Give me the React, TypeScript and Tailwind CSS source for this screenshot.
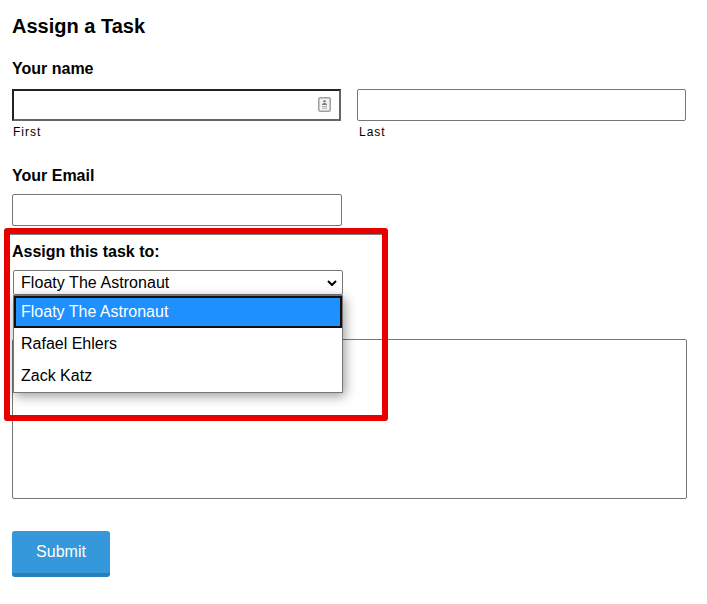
export default function App() {
  const font = { fontFamily: '"Liberation Sans", Arial, sans-serif' };
  return (
    <div className="relative w-[707px] h-[604px] bg-white text-black overflow-hidden" style={font}>
      <div className="flex flex-col pl-[12px] pt-[14px]">
        <h2 className="text-[20px] leading-[24px] font-bold">Assign a Task</h2>
        <label className="mt-[22px] h-[18px] text-[16px] leading-[18px] font-bold">Your name</label>
        <div className="mt-[11px] flex gap-[16px]">
          <div className="flex flex-col w-[329px]">
            <div className="relative h-[32px] border-2 border-t-[#222222] border-l-[#222222] border-r-[#666666] border-b-[#666666] bg-white">
              <svg className="absolute right-[8px] top-[6px]" width="13" height="15" viewBox="0 0 13 15">
                <rect x="0.75" y="0.75" width="11.5" height="13.5" rx="1.5" fill="#f2f2f2" stroke="#a0a0a0" strokeWidth="1.5" />
                <circle cx="6.5" cy="4.3" r="1.2" fill="#808080" />
                <path d="M4 8 L9 8 L9 7 L7.3 6 L5.7 6 L4 7 Z" fill="#808080" />
                <path d="M4 9.5 H9 M4 11.2 H9" stroke="#b0b0b0" strokeWidth="1" />
              </svg>
            </div>
            <span className="mt-[4px] ml-[1px] text-[12px] leading-[14px] tracking-[1px]">First</span>
          </div>
          <div className="flex flex-col w-[329px]">
            <div className="h-[32px] border border-[#767676] rounded-[2px] bg-white" />
            <span className="mt-[4px] ml-[2px] text-[12px] leading-[14px] tracking-[1px]">Last</span>
          </div>
        </div>
        <label className="mt-[28px] h-[18px] text-[16px] leading-[18px] font-bold">Your Email</label>
        <div className="mt-[9px] w-[330px] h-[32px] border border-[#767676] rounded-[2px] bg-white" />
        <label className="mt-[17px] h-[18px] text-[16px] leading-[18px] font-bold">Assign this task to:</label>
        <div className="mt-[9px] ml-[1px] w-[330px] h-[25px] border border-[#767676] rounded-[2px] bg-white flex items-center justify-between pl-[7px] pr-[5px]">
          <span className="text-[16px] leading-[18px] tracking-[0.05px]">Floaty The Astronaut</span>
          <svg width="10" height="6" viewBox="0 0 10 6" fill="none">
            <path d="M1 1 L5 5 L9 1" stroke="#000" strokeWidth="2" />
          </svg>
        </div>
        <div className="mt-[44px] w-[675px] h-[160px] border border-[#767676] rounded-[2px] bg-white" />
        <button className="mt-[32px] w-[98px] h-[46px] rounded-[3px] bg-[#3498db] border-b-4 border-[#2980b9] text-white text-[16px] leading-[18px] text-center">
          Submit
        </button>
      </div>

      {/* open select menu */}
      <div className="absolute left-[13px] top-[295px] w-[330px] h-[98px] bg-white border border-[#767676] shadow-[2px_3px_11px_rgba(0,0,0,0.4)] text-[16px]">
        <div className="h-[32px] bg-[#1e90ff] border-2 border-[#101010] text-white flex items-center pl-[5px]">Floaty The Astronaut</div>
        <div className="h-[32px] flex items-center pl-[7px]">Rafael Ehlers</div>
        <div className="h-[32px] flex items-center pl-[7px]">Zack Katz</div>
      </div>

      {/* red annotation */}
      <div className="absolute left-[4px] top-[228px] w-[384px] h-[193px] border-[6px] border-[#e60000] rounded-[3px]">
        <div className="h-[1px] bg-[#808080]" />
      </div>
    </div>
  );
}
